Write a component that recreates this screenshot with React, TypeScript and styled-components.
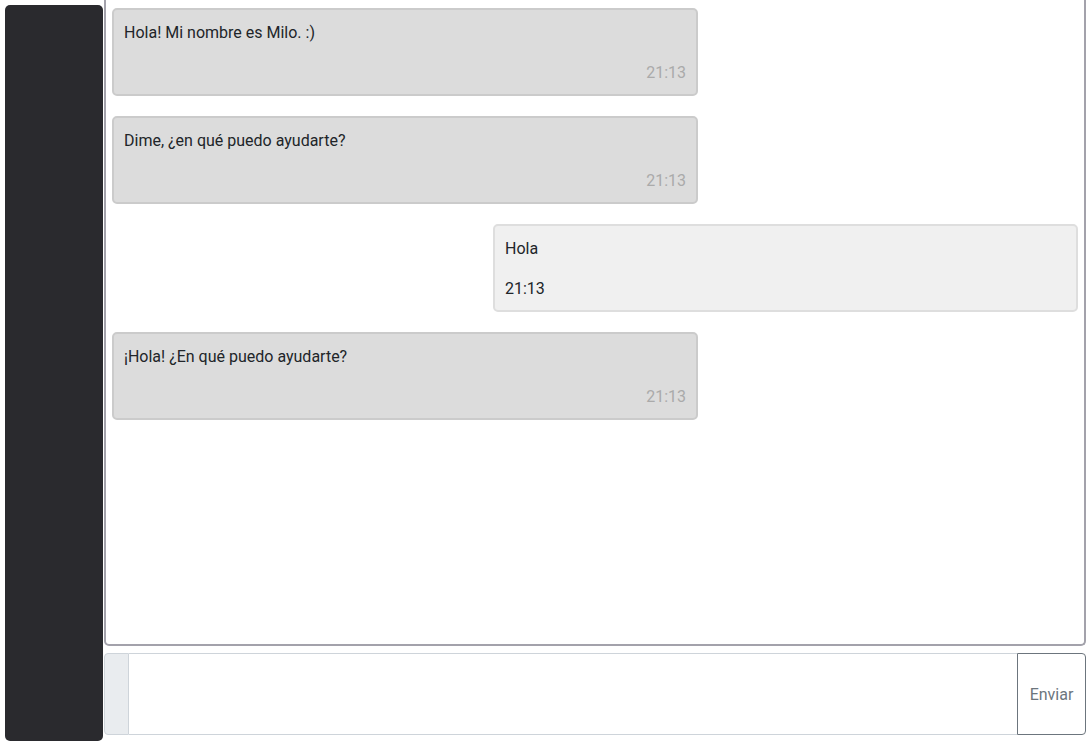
import React from "react";
import styled, { createGlobalStyle } from "styled-components";

const Global = createGlobalStyle`
  html, body { margin: 0; padding: 0; background: #ffffff; overflow: hidden; }
  body { font-family: Roboto, "Liberation Sans", Arial, sans-serif; color: #212529; }
  * { box-sizing: border-box; }
`;

const Layout = styled.div`
  display: flex;
  gap: 1px;
  padding: 5px 6px 0 5px;
  height: 751px;
`;

const Sidebar = styled.aside`
  width: 98px;
  height: 736px;
  flex: none;
  background: #2a2a2e;
  border-radius: 5px;
`;

const Main = styled.main`
  flex: 1;
  display: flex;
  flex-direction: column;
  gap: 7px;
  margin-top: -5px;
`;

const ChatPanel = styled.section`
  height: 646px;
  border: 2px solid #a3a2ab;
  border-top: none;
  border-radius: 0 0 5px 5px;
  padding: 8px 6px;
  display: flex;
  flex-direction: column;
  gap: 20px;
  overflow: hidden;
`;

const Bubble = styled.div<{ $mine?: boolean }>`
  width: ${(p) => (p.$mine ? "585px" : "586px")};
  height: 88px;
  align-self: ${(p) => (p.$mine ? "flex-end" : "flex-start")};
  background: ${(p) => (p.$mine ? "#f0f0f0" : "#dcdcdc")};
  border: 2px solid ${(p) => (p.$mine ? "#dedede" : "#cbcbcb")};
  border-radius: 5px;
  padding: 11px 10px 9px 10px;
  font-size: 16px;
  line-height: 24px;
`;

const Text = styled.p`
  margin: 0 0 16px 0;
`;

const Time = styled.div<{ $mine?: boolean }>`
  text-align: ${(p) => (p.$mine ? "left" : "right")};
  color: ${(p) => (p.$mine ? "#212529" : "#aaaaaa")};
`;

const InputGroup = styled.form`
  display: flex;
  height: 82px;
`;

const Addon = styled.span`
  width: 25px;
  flex: none;
  background: #e9ecef;
  border: 1px solid #ced4da;
  border-radius: 4px 0 0 4px;
`;

const Field = styled.input`
  flex: 1;
  min-width: 0;
  border: 1px solid #ced4da;
  border-left: none;
  border-right: none;
  font: inherit;
  font-size: 16px;
  padding: 6px 12px;
  outline: none;
`;

const SendButton = styled.button`
  width: 69px;
  flex: none;
  background: #ffffff;
  border: 1px solid #6c757d;
  border-radius: 0 4px 4px 0;
  color: #6c757d;
  font-family: Roboto, "Liberation Sans", Arial, sans-serif;
  font-size: 16px;
  padding: 0;
`;

const messages = [
  { text: "Hola! Mi nombre es Milo. :)", time: "21:13", mine: false },
  { text: "Dime, ¿en qué puedo ayudarte?", time: "21:13", mine: false },
  { text: "Hola", time: "21:13", mine: true },
  { text: "¡Hola! ¿En qué puedo ayudarte?", time: "21:13", mine: false },
];

export default function App() {
  return (
    <>
      <Global />
      <Layout>
        <Sidebar />
        <Main>
          <ChatPanel>
            {messages.map((m, i) => (
              <Bubble key={i} $mine={m.mine}>
                <Text>{m.text}</Text>
                <Time $mine={m.mine}>{m.time}</Time>
              </Bubble>
            ))}
          </ChatPanel>
          <InputGroup onSubmit={(e) => e.preventDefault()}>
            <Addon />
            <Field type="text" />
            <SendButton type="submit">Enviar</SendButton>
          </InputGroup>
        </Main>
      </Layout>
    </>
  );
}
